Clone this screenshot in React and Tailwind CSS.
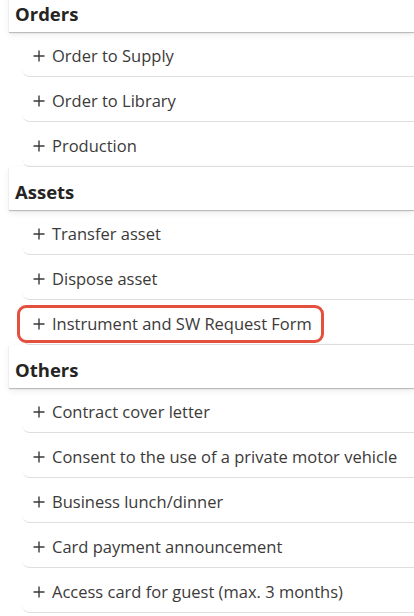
const sections = [
  { title: "Orders", items: ["Order to Supply", "Order to Library", "Production"] },
  { title: "Assets", items: ["Transfer asset", "Dispose asset", "Instrument and SW Request Form"] },
  {
    title: "Others",
    items: [
      "Contract cover letter",
      "Consent to the use of a private motor vehicle",
      "Business lunch/dinner",
      "Card payment announcement",
      "Access card for guest (max. 3 months)",
    ],
  },
];

const highlighted = "Instrument and SW Request Form";

const Plus = () => (
  <svg width="12" height="12" viewBox="0 0 12 12" className="shrink-0 mr-[7px]">
    <path d="M6 0.5V11.5M0.5 6H11.5" stroke="#3b3a39" strokeWidth="1.4" fill="none" />
  </svg>
);

const Label = ({ text }) => (
  <div className="flex items-center pt-[4px]">
    <Plus />
    <span className="text-[16.5px] text-[#3b3a39]">{text}</span>
  </div>
);

const App = () => {
  return (
    <div className="w-[414px] h-[616px] overflow-hidden bg-white text-[#323130]" style={{ fontFamily: '"Open Sans", "Noto Sans", sans-serif' }}>
      <div className="flex flex-col -mt-[11px]">
        {sections.map((section) => (
          <div key={section.title} className="flex flex-col">
            <div className="ml-[9px] h-[43px] flex items-center pt-[6px] pl-[6px] bg-white relative z-10 shadow-[0_1px_1px_rgba(0,0,0,0.22),0_3px_7px_rgba(0,0,0,0.08)]">
              <span className="text-[18.5px] font-bold text-[#252423]">{section.title}</span>
            </div>
            {section.items.map((item) => (
              <div key={item} className="ml-[22px] h-[45px] flex items-center border-b border-[#e1dfdd] rounded-bl-[8px] pl-[11px]">
                {item === highlighted ? (
                  <div className="-ml-[16px] mt-[4px] pl-[13px] pr-[9px] h-[38px] flex items-center border-[3px] border-[#e4503d] rounded-[9px]">
                    <div className="flex items-center">
                      <Plus />
                      <span className="text-[16.5px] text-[#3b3a39]">{item}</span>
                    </div>
                  </div>
                ) : (
                  <Label text={item} />
                )}
              </div>
            ))}
          </div>
        ))}
      </div>
    </div>
  );
};

export default App;
